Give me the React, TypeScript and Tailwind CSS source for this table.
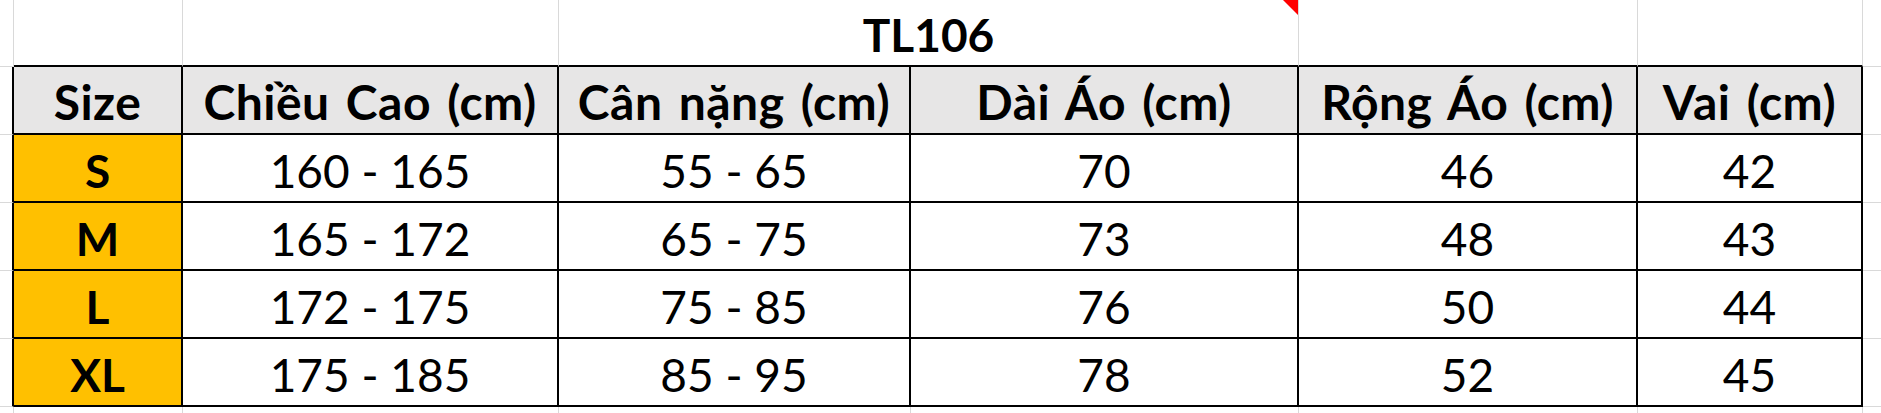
const headers = ['Size', 'Chiều Cao (cm)', 'Cân nặng (cm)', 'Dài Áo (cm)', 'Rộng Áo (cm)', 'Vai (cm)'];

const rows = [
  ['S', '160 - 165', '55 - 65', '70', '46', '42'],
  ['M', '165 - 172', '65 - 75', '73', '48', '43'],
  ['L', '172 - 175', '75 - 85', '76', '50', '44'],
  ['XL', '175 - 185', '85 - 95', '78', '52', '45'],
];

const font = { fontFamily: 'Lato, "Noto Sans", sans-serif' };

function Cell({ children, className = '' }: { children?: React.ReactNode; className?: string }) {
  return (
    <div className={`flex items-end justify-center pb-[7px] leading-none text-black whitespace-nowrap ${className}`}>
      {children}
    </div>
  );
}

export default function App() {
  return (
    <div
      className="grid w-[1881px] h-[413px] overflow-hidden bg-white text-[46px]"
      style={{
        ...font,
        gridTemplateColumns: '14px 169px 376px 352px 388px 339px 225px 18px',
        gridTemplateRows: '67px 68px 68px 68px 68px 68px 6px',
      }}
    >
      {/* title row */}
      <Cell className="border-r border-b border-[#d9d9d9]" />
      <Cell className="border-r border-[#d9d9d9] border-b-2 border-b-black" />
      <Cell className="border-r border-[#d9d9d9] border-b-2 border-b-black" />
      <Cell className="relative col-span-2 font-bold border-r border-[#d9d9d9] border-b-2 border-b-black">
        TL106
        <span className="absolute top-0 right-0 w-0 h-0 border-l-[15px] border-l-transparent border-t-[15px] border-t-[#ff0000]" />
      </Cell>
      <Cell className="border-r border-[#d9d9d9] border-b-2 border-b-black" />
      <Cell className="border-r border-[#d9d9d9] border-b-2 border-b-black" />
      <Cell className="border-b border-[#d9d9d9]" />

      {/* header row */}
      <Cell className="border-b border-b-[#d9d9d9] border-r-2 border-r-black" />
      {headers.map((h) => (
        <Cell
          key={h}
          className="font-bold text-[48px] tracking-[0.5px] [word-spacing:4px] bg-[#e7e6e6] border-r-2 border-b-2 border-black"
        >
          {h}
        </Cell>
      ))}
      <Cell className="border-b border-[#d9d9d9]" />

      {/* data rows */}
      {rows.map((r) => (
        <div key={r[0]} className="contents">
          <Cell className="border-b border-b-[#d9d9d9] border-r-2 border-r-black" />
          {r.map((v, i) => (
            <Cell
              key={i}
              className={`border-r-2 border-b-2 border-black ${i === 0 ? 'font-bold bg-[#ffc000]' : ''}`}
            >
              {v}
            </Cell>
          ))}
          <Cell className="border-b border-[#d9d9d9]" />
        </div>
      ))}

      {/* row below table */}
      <div className="border-r border-[#d9d9d9]" />
      <div className="border-r border-[#d9d9d9]" />
      <div className="border-r border-[#d9d9d9]" />
      <div className="border-r border-[#d9d9d9]" />
      <div className="border-r border-[#d9d9d9]" />
      <div className="border-r border-[#d9d9d9]" />
      <div className="border-r border-[#d9d9d9]" />
      <div />
    </div>
  );
}
